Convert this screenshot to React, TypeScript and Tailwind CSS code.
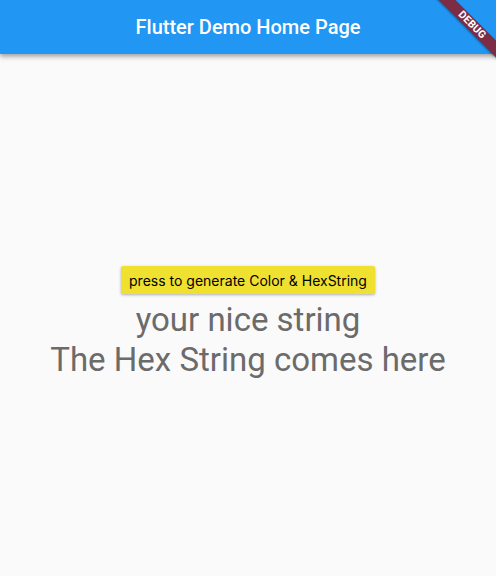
import React from 'react';

export default function App() {
  return (
    <div
      className="w-[496px] h-[576px] flex flex-col bg-[#fafafa] overflow-hidden relative"
      style={{ fontFamily: 'Roboto, "Noto Sans", sans-serif' }}
    >
      <header className="relative z-10 h-[54px] shrink-0 bg-[#2196f3] flex items-center justify-center shadow-[0_2px_4px_rgba(0,0,0,0.25),0_4px_5px_rgba(0,0,0,0.12)]">
        <h1 className="text-white text-[20px] font-medium">Flutter Demo Home Page</h1>
      </header>

      <main className="flex-1 flex flex-col items-center justify-center pt-[16px]">
        <button className="h-[28px] px-[8px] bg-[#f0e130] text-black text-[14px] rounded-[2px] shadow-[0_1px_3px_rgba(0,0,0,0.3)] font-['Inter',sans-serif]">
          press to generate Color &amp; HexString
        </button>
        <p className="mt-[6px] text-[33px] leading-[40px] text-[#6b6b6b]">your nice string</p>
        <p className="text-[33px] leading-[40px] text-[#6b6b6b]">The Hex String comes here</p>
      </main>

      {/* debug banner */}
      <div className="absolute z-20 left-[417px] top-[18.5px] w-[110px] h-[12px] rotate-45 bg-[#7d2c45] flex items-center justify-center shadow-[0_1px_2px_rgba(0,0,0,0.3)]">
        <span className="text-white text-[10.5px] font-bold leading-none tracking-[0.2px]">DEBUG</span>
      </div>
    </div>
  );
}
